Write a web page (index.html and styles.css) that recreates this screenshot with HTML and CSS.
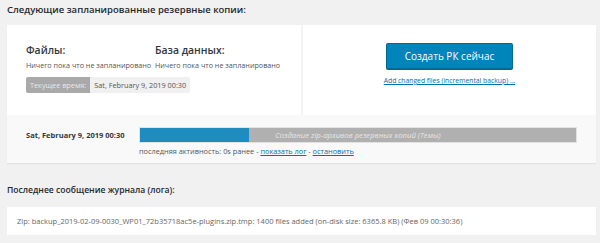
FILE: index.html
```html
<!DOCTYPE html>
<html>
 <head>
  <meta charset="utf-8">
  <link rel="stylesheet" href="styles.css">
 </head>
 <body>
  <h3 class="title">Следующие запланированные резервные копии:</h3>

  <div class="card">
   <div class="card-top">
    <div class="sched">
     <div class="sched-grid">
      <div>
       <div class="sched-h">Файлы:</div>
       <div class="sched-v">Ничего пока что не запланировано</div>
      </div>
      <div>
       <div class="sched-h">База данных:</div>
       <div class="sched-v">Ничего пока что не запланировано</div>
      </div>
     </div>
     <div class="now">
      <span class="now-label">Текущее время:</span><span class="now-val">Sat, February 9, 2019 00:30</span>
     </div>
    </div>
    <div class="actions">
     <button class="btn">Создать РК сейчас</button>
     <a class="small-link" href="#">Add changed files (incremental backup) ...</a>
    </div>
   </div>

   <div class="card-bottom">
    <div class="job-date">Sat, February 9, 2019 00:30</div>
    <div class="job">
     <div class="bar">
      <div class="bar-fill" style="width: 25%"></div>
      <span class="bar-text">Создание zip-архивов резервных копий (Темы)</span>
     </div>
     <div class="job-info">последняя активность: 0s ранее - <a href="#">показать лог</a> - <a href="#">остановить</a></div>
    </div>
   </div>
  </div>

  <h3 class="title log-title">Последнее сообщение журнала (лога):</h3>
  <div class="log">Zip: backup_2019-02-09-0030_WP01_72b35718ac5e-plugins.zip.tmp: 1400 files added (on-disk size: 6365.8 KB) (Фев 09 00:30:36)</div>
 </body>
</html>
```

FILE: styles.css
```css
body {
  margin: 0;
  padding: 0 4px 0 7px;
  background: #f1f1f1;
  font-family: 'Open Sans', sans-serif;
  color: #444;
}

.title {
  margin: 0;
  padding-top: 2px;
  height: 23px;
  font-size: 9.5px;
  line-height: 16px;
  font-weight: 600;
  color: #23282d;
}

.card {
  background: #fff;
  box-shadow: 0 1px 1px rgba(0, 0, 0, 0.06);
}

.card-top {
  display: flex;
  height: 90px;
}

.sched {
  width: 275px;
  padding: 16px 0 0 19px;
}

.sched-grid {
  display: grid;
  grid-template-columns: 129px auto;
}

.sched-h {
  font-size: 10.4px;
  font-weight: 600;
  line-height: 18px;
  color: #32373c;
}

.sched-v {
  font-size: 7.2px;
  line-height: 12px;
  color: #555;
  white-space: nowrap;
}

.now {
  display: flex;
  margin-top: 6px;
  font-size: 7.3px;
  line-height: 16px;
}

.now-label {
  background: #a9a9a9;
  color: #e8e8e8;
  padding: 0 4px;
  border-radius: 2px 0 0 2px;
}

.now-val {
  background: #f0f0f0;
  color: #555;
  padding: 0 4px;
  border-radius: 0 2px 2px 0;
}

.actions {
  flex: 1;
  border-left: 2px solid #f3f3f3;
  display: flex;
  flex-direction: column;
  align-items: center;
  padding-top: 18px;
}

.btn {
  width: 127px;
  height: 27px;
  background: #0085ba;
  border: 1px solid #006799;
  border-bottom-width: 2px;
  border-radius: 2px;
  color: #fff;
  font-family: 'Open Sans', sans-serif;
  font-size: 10px;
  padding: 0;
}

.small-link {
  margin-top: 6px;
  font-size: 6.8px;
  line-height: 10px;
}

.card-bottom {
  display: flex;
  background: #f9f9f9;
  height: 48px;
  padding-left: 19px;
}

.job-date {
  width: 113px;
  padding-top: 14px;
  font-size: 7.5px;
  font-weight: 700;
  line-height: 12px;
  color: #32373c;
}

.job {
  padding-top: 12px;
}

.bar {
  position: relative;
  width: 436px;
  height: 14px;
  background: #b0b0b0;
  border: 1px solid #e2e2e2;
}

.bar-fill {
  height: 100%;
  background: #1e8cbe;
}

.bar-text {
  position: absolute;
  left: 0;
  right: 0;
  top: 0;
  text-align: center;
  font-size: 7.7px;
  line-height: 14px;
  font-style: italic;
  color: #e6e6e6;
}

.job-info {
  margin-top: 2px;
  font-size: 7.35px;
  line-height: 12px;
  color: #555;
}

.job-info a,
.small-link {
  color: #0073aa;
}

.log-title {
  margin-top: 17px;
  height: 25px;
  font-size: 8.6px;
}

.log {
  background: #fff;
  height: 28px;
  line-height: 28px;
  padding-left: 10px;
  font-size: 7.5px;
  color: #666;
  box-shadow: 0 1px 1px rgba(0, 0, 0, 0.04);
}
```
